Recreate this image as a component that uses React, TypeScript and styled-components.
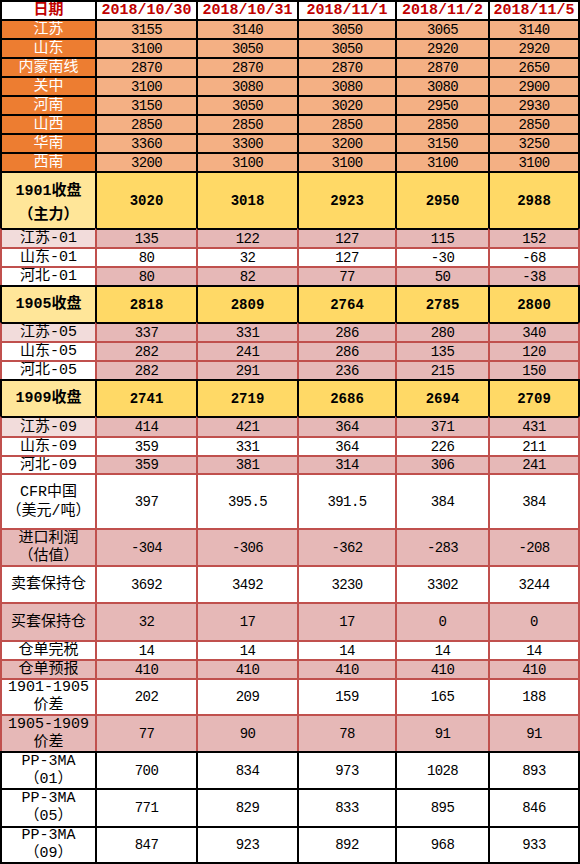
import styled, { createGlobalStyle } from 'styled-components';

const BLACK = '#000000';
const RED = '#c0504d';

const GlobalStyle = createGlobalStyle`
  html, body {
    margin: 0;
    padding: 0;
    background: #ffffff;
  }
  body {
    font-family: "Liberation Mono", "Noto Sans CJK SC", monospace;
  }
`;

const Sheet = styled.div`
  width: 580px;
  border-bottom: 2px solid ${BLACK};
`;

const Row = styled.div<{ $h: number }>`
  display: grid;
  grid-template-columns: 95px 101px 101px 98px 93px 92px;
  height: ${({ $h }) => $h}px;
`;

const Cell = styled.div<{ $bg: string; $line: string; $side: string; $last?: boolean }>`
  box-sizing: border-box;
  display: flex;
  flex-direction: column;
  align-items: center;
  justify-content: center;
  overflow: hidden;
  white-space: nowrap;
  background: ${({ $bg }) => $bg};
  border-top: 2px solid ${({ $line }) => $line};
  border-left: 2px solid ${({ $side }) => $side};
  border-right: ${({ $last, $side }) => ($last ? `2px solid ${$side}` : 'none')};
`;

const HeadCell = styled(Cell)`
  color: #c00000;
  font-weight: bold;
  font-size: 15px;
  line-height: 17px;
`;

const LabelCell = styled(Cell)<{ $color: string; $bold: boolean; $lh: number; $top?: number }>`
  color: ${({ $color }) => $color};
  font-weight: ${({ $bold }) => ($bold ? 'bold' : 'normal')};
  font-size: 15px;
  line-height: ${({ $lh }) => $lh}px;
  justify-content: ${({ $top }) => ($top ? 'flex-start' : 'center')};
  padding-top: ${({ $top }) => $top ?? 0}px;
`;

const ValueCell = styled(Cell)<{ $bold: boolean }>`
  color: #000000;
  font-weight: ${({ $bold }) => ($bold ? 'bold' : 'normal')};
  font-size: 14px;
  letter-spacing: ${({ $bold }) => ($bold ? '0' : '-0.6px')};
  line-height: 16px;
`;

type Style = {
  labelBg: string;
  labelColor: string;
  valueBg: string;
  bold?: boolean;
};

const styles: Record<string, Style> = {
  region: { labelBg: '#ed7d31', labelColor: '#ffffff', valueBg: '#f4b084' },
  main: { labelBg: '#ffe699', labelColor: '#000000', valueBg: '#ffd966', bold: true },
  pinkA: { labelBg: '#f2dcdb', labelColor: '#000000', valueBg: '#e6b8b7' },
  pinkB: { labelBg: '#ffffff', labelColor: '#000000', valueBg: '#e6b8b7' },
  pink: { labelBg: '#e6b8b7', labelColor: '#000000', valueBg: '#e6b8b7' },
  white: { labelBg: '#ffffff', labelColor: '#000000', valueBg: '#ffffff' },
};

type RowData = {
  label: string[];
  values: string[];
  h: number;
  kind: keyof typeof styles;
  line: string;
  side: string;
  lh?: number;
  top?: number;
};

const dates = ['2018/10/30', '2018/10/31', '2018/11/1', '2018/11/2', '2018/11/5'];

const rows: RowData[] = [
  { label: ['江苏'], values: ['3155', '3140', '3050', '3065', '3140'], h: 19, kind: 'region', line: BLACK, side: BLACK },
  { label: ['山东'], values: ['3100', '3050', '3050', '2920', '2920'], h: 19, kind: 'region', line: BLACK, side: BLACK },
  { label: ['内蒙南线'], values: ['2870', '2870', '2870', '2870', '2650'], h: 19, kind: 'region', line: BLACK, side: BLACK },
  { label: ['关中'], values: ['3100', '3080', '3080', '3080', '2900'], h: 19, kind: 'region', line: BLACK, side: BLACK },
  { label: ['河南'], values: ['3150', '3050', '3020', '2950', '2930'], h: 19, kind: 'region', line: BLACK, side: BLACK },
  { label: ['山西'], values: ['2850', '2850', '2850', '2850', '2850'], h: 19, kind: 'region', line: BLACK, side: BLACK },
  { label: ['华南'], values: ['3360', '3300', '3200', '3150', '3250'], h: 19, kind: 'region', line: BLACK, side: BLACK },
  { label: ['西南'], values: ['3200', '3100', '3100', '3100', '3100'], h: 19, kind: 'region', line: BLACK, side: BLACK },
  { label: ['1901收盘', '（主力）'], values: ['3020', '3018', '2923', '2950', '2988'], h: 57, kind: 'main', line: BLACK, side: BLACK, lh: 24, top: 7 },
  { label: ['江苏-01'], values: ['135', '122', '127', '115', '152'], h: 19, kind: 'pinkA', line: BLACK, side: RED },
  { label: ['山东-01'], values: ['80', '32', '127', '-30', '-68'], h: 19, kind: 'white', line: RED, side: RED },
  { label: ['河北-01'], values: ['80', '82', '77', '50', '-38'], h: 19, kind: 'pinkB', line: RED, side: RED },
  { label: ['1905收盘'], values: ['2818', '2809', '2764', '2785', '2800'], h: 37, kind: 'main', line: BLACK, side: BLACK },
  { label: ['江苏-05'], values: ['337', '331', '286', '280', '340'], h: 19, kind: 'pinkA', line: BLACK, side: RED },
  { label: ['山东-05'], values: ['282', '241', '286', '135', '120'], h: 19, kind: 'pinkB', line: RED, side: RED },
  { label: ['河北-05'], values: ['282', '291', '236', '215', '150'], h: 19, kind: 'pinkB', line: RED, side: RED },
  { label: ['1909收盘'], values: ['2741', '2719', '2686', '2694', '2709'], h: 37, kind: 'main', line: BLACK, side: BLACK },
  { label: ['江苏-09'], values: ['414', '421', '364', '371', '431'], h: 20, kind: 'pinkA', line: BLACK, side: RED },
  { label: ['山东-09'], values: ['359', '331', '364', '226', '211'], h: 19, kind: 'white', line: RED, side: RED },
  { label: ['河北-09'], values: ['359', '381', '314', '306', '241'], h: 18, kind: 'pinkB', line: RED, side: RED },
  { label: ['CFR中国', '（美元/吨）'], values: ['397', '395.5', '391.5', '384', '384'], h: 55, kind: 'white', line: RED, side: RED, lh: 19 },
  { label: ['进口利润', '（估值）'], values: ['-304', '-306', '-362', '-283', '-208'], h: 37, kind: 'pink', line: RED, side: RED, lh: 18 },
  { label: ['卖套保持仓'], values: ['3692', '3492', '3230', '3302', '3244'], h: 37, kind: 'white', line: RED, side: RED },
  { label: ['买套保持仓'], values: ['32', '17', '17', '0', '0'], h: 38, kind: 'pink', line: RED, side: RED },
  { label: ['仓单完税'], values: ['14', '14', '14', '14', '14'], h: 19, kind: 'white', line: RED, side: RED },
  { label: ['仓单预报'], values: ['410', '410', '410', '410', '410'], h: 19, kind: 'pink', line: RED, side: RED },
  { label: ['1901-1905', '价差'], values: ['202', '209', '159', '165', '188'], h: 36, kind: 'white', line: RED, side: RED, lh: 18 },
  { label: ['1905-1909', '价差'], values: ['77', '90', '78', '91', '91'], h: 37, kind: 'pink', line: RED, side: RED, lh: 18 },
  { label: ['PP-3MA', '（01）'], values: ['700', '834', '973', '1028', '893'], h: 37, kind: 'white', line: BLACK, side: BLACK, lh: 18 },
  { label: ['PP-3MA', '（05）'], values: ['771', '829', '833', '895', '846'], h: 38, kind: 'white', line: BLACK, side: BLACK, lh: 18 },
  { label: ['PP-3MA', '（09）'], values: ['847', '923', '892', '968', '933'], h: 36, kind: 'white', line: BLACK, side: BLACK, lh: 18 },
];

export default function App() {
  return (
    <>
      <GlobalStyle />
      <Sheet>
        <Row $h={19}>
          <HeadCell $bg="#ffffff" $line={BLACK} $side={BLACK}>日期</HeadCell>
          {dates.map((d, i) => (
            <HeadCell key={d} $bg="#ffffff" $line={BLACK} $side={BLACK} $last={i === dates.length - 1}>
              {d}
            </HeadCell>
          ))}
        </Row>
        {rows.map((r, idx) => {
          const s = styles[r.kind];
          return (
            <Row key={idx} $h={r.h}>
              <LabelCell
                $bg={s.labelBg}
                $line={r.line}
                $side={r.side === RED && r.kind !== 'main' ? RED : BLACK}
                $color={s.labelColor}
                $bold={!!s.bold}
                $lh={r.lh ?? 17}
                $top={r.top}
              >
                {r.label.map((l) => (
                  <span key={l}>{l}</span>
                ))}
              </LabelCell>
              {r.values.map((v, i) => (
                <ValueCell
                  key={i}
                  $bg={s.valueBg}
                  $line={r.line}
                  $side={r.side}
                  $last={i === r.values.length - 1}
                  $bold={!!s.bold}
                >
                  {v}
                </ValueCell>
              ))}
            </Row>
          );
        })}
      </Sheet>
    </>
  );
}
